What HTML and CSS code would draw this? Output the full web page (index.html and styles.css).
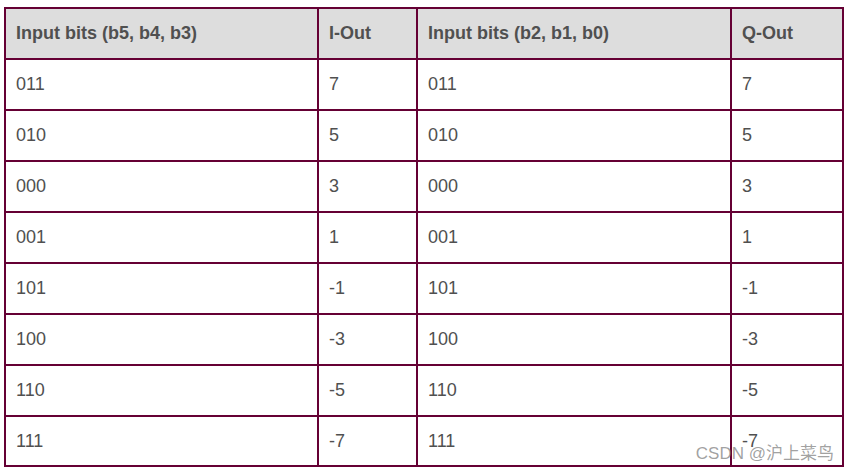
FILE: index.html
```html
<!DOCTYPE html>
<html>
<head>
<meta charset="utf-8">
<link rel="stylesheet" href="styles.css">
</head>
<body>
<div class="wrap">
<table class="qam">
  <colgroup>
    <col class="c1"><col class="c2"><col class="c3"><col class="c4">
  </colgroup>
  <thead>
    <tr><th>Input bits (b5, b4, b3)</th><th>I-Out</th><th>Input bits (b2, b1, b0)</th><th>Q-Out</th></tr>
  </thead>
  <tbody>
    <tr><td>011</td><td>7</td><td>011</td><td>7</td></tr>
    <tr><td>010</td><td>5</td><td>010</td><td>5</td></tr>
    <tr><td>000</td><td>3</td><td>000</td><td>3</td></tr>
    <tr><td>001</td><td>1</td><td>001</td><td>1</td></tr>
    <tr><td>101</td><td>-1</td><td>101</td><td>-1</td></tr>
    <tr><td>100</td><td>-3</td><td>100</td><td>-3</td></tr>
    <tr><td>110</td><td>-5</td><td>110</td><td>-5</td></tr>
    <tr class="last"><td>111</td><td>-7</td><td>111</td><td>-7</td></tr>
  </tbody>
</table>
<div class="mark">CSDN @沪上菜鸟</div>
</div>
</body>
</html>
```
FILE: styles.css
```css
html, body {
  margin: 0;
  padding: 0;
  background: #ffffff;
}
body {
  padding: 7px 5px 5px 4px;
  font-family: "Liberation Sans", Arial, sans-serif;
}
.wrap {
  position: relative;
  width: 840px;
}
.qam {
  border-collapse: collapse;
  width: 840px;
  table-layout: fixed;
  font-size: 18px;
  color: #505050;
}
.c1 { width: 313px; }
.c2 { width: 99px; }
.c3 { width: 314px; }
.c4 { width: 112px; }
.qam th, .qam td {
  border: 2px solid #650034;
  padding: 0 10px;
  text-align: left;
  vertical-align: middle;
  height: 51px;
  box-sizing: border-box;
}
.qam tr.last td {
  height: 50px;
}
.qam th {
  background: #dddddd;
  font-weight: bold;
  color: #505050;
}
.qam td {
  font-weight: normal;
}
.mark {
  position: absolute;
  right: 10px;
  bottom: 3px;
  font-family: "Liberation Sans", "Noto Sans CJK SC", sans-serif;
  font-size: 17px;
  color: rgba(120, 120, 120, 0.7);
  white-space: nowrap;
}
```
